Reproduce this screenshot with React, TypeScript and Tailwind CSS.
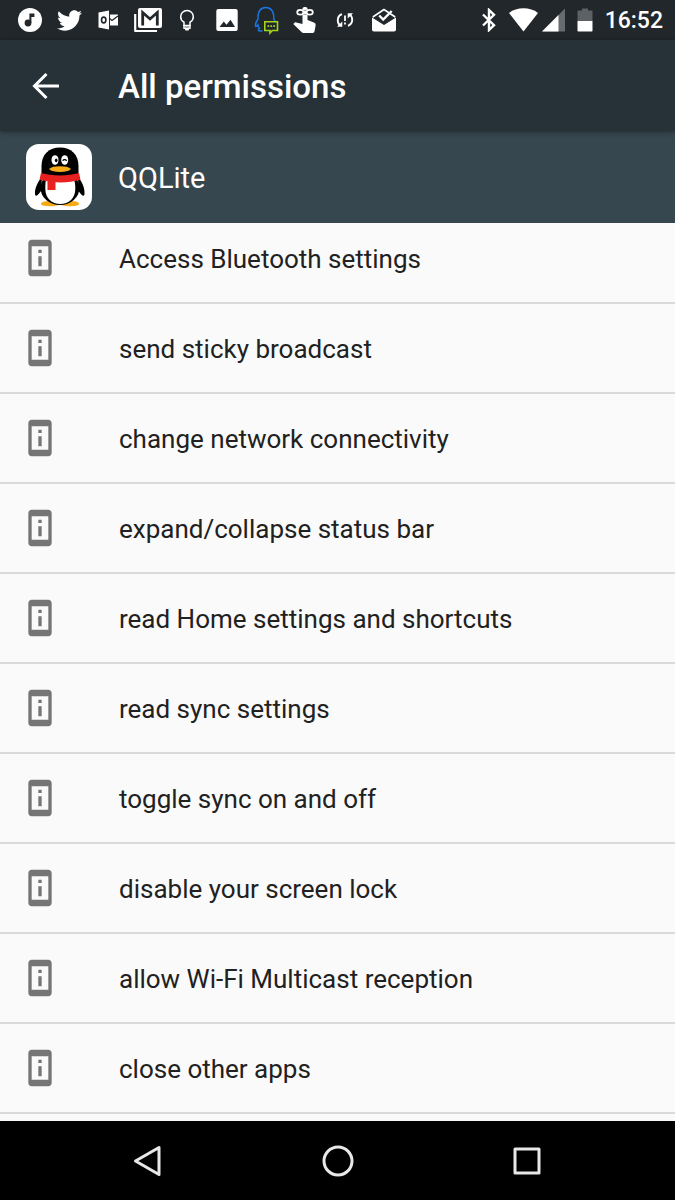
import { MdPermDeviceInformation } from 'react-icons/md';
import { FaTwitter } from 'react-icons/fa';

interface IconProps {
  children: React.ReactNode;
}

const permissions: string[] = [
  'Access Bluetooth settings',
  'send sticky broadcast',
  'change network connectivity',
  'expand/collapse status bar',
  'read Home settings and shortcuts',
  'read sync settings',
  'toggle sync on and off',
  'disable your screen lock',
  'allow Wi-Fi Multicast reception',
  'close other apps'
];

const StatusIcon = ({ children }: IconProps) => (
  <svg viewBox="0 0 30 30" className="w-[30px] h-[30px] shrink-0" fill="none" aria-hidden="true">
    {children}
  </svg>
);

const NotificationIcons = () => (
  <div className="grid w-[394px] shrink-0 grid-cols-10 items-center justify-items-center">
    {/* music */}
    <StatusIcon>
      <circle cx="15" cy="15" r="12" fill="#fff" />
      <circle cx="13" cy="18" r="3.4" fill="#21272b" />
      <path d="M14.4 18V8.5h5v3.400h-3V18z" fill="#21272b" />
    </StatusIcon>
    <FaTwitter className="w-[25px] h-[25px]" aria-hidden="true" />
    {/* outlook */}
    <StatusIcon>
      <path d="M5.5 7.5 16 5.5v19l-10.500-2z" fill="#fff" />
      <ellipse cx="10.700" cy="15" rx="2.200" ry="2.900" stroke="#21272b" strokeWidth="1.600" />
      <path d="M17 9.500h8v11h-8z" fill="#fff" />
      <path d="m16.500 13.500 2.500 2 6-4.500" stroke="#21272b" strokeWidth="1.300" />
    </StatusIcon>
    {/* gmail */}
    <StatusIcon>
      <path d="M2.200 9v17H24" stroke="#fff" strokeWidth="2.200" strokeLinejoin="round" />
      <rect x="5" y="3" width="24" height="20" rx="2" fill="#fff" />
      <path d="M9.700 20.500V7.500L17 14l7.300-6.500v13" stroke="#21272b" strokeWidth="2.800" />
    </StatusIcon>
    {/* bulb */}
    <StatusIcon>
      <path
        d="M12 20.500v-3.300C9.800 16 8.700 14 8.700 11.700a6.300 6.300 0 0 1 12.600 0c0 2.300-1.100 4.300-3.300 5.500v3.300z"
        stroke="#fff"
        strokeWidth="1.500"
      />
      <path d="M11.300 20h7.400v4h-1.500l-.7 1.500h-3l-.7-1.500h-1.500z" fill="#fff" />
      <path d="M12.500 22h5" stroke="#21272b" strokeWidth=".7" />
    </StatusIcon>
    {/* picture */}
    <StatusIcon>
      <rect x="4.300" y="4" width="21.400" height="22" rx="2" fill="#fff" />
      <path d="m7.500 22 4.300-5.500 2.700 3.200 4-5 4.500 7.300z" fill="#21272b" />
    </StatusIcon>
    {/* qq message */}
    <StatusIcon>
      <path
        d="M11.500 25.500c-2 1-4.500.8-4-1l1-1.200c-1-1-1.500-2.300-1.600-3.300-1 1.300-2.200 2.200-2.400.8-.3-2 .8-4.300 2.500-6.500C6.500 6.500 9.500 2.500 14.800 2.500s8.400 4 8 11.800c.5.600 1 1.200 1.300 2"
        stroke="#1878e0"
        strokeWidth="1.500"
      />
      <path d="M13.800 16.800h12.700v8.700h-5.200L19 28v-2.500h-5.200z" fill="#21272b" stroke="#a4d51c" strokeWidth="1.600" />
      <path d="M16.500 21.200h1.700M19.400 21.200h1.700M22.300 21.200H24" stroke="#a4d51c" strokeWidth="1.800" />
    </StatusIcon>
    {/* reminder finger */}
    <StatusIcon>
      <path
        d="M12.500 3.500c0-2 5-2 5 0V15l6.300 2.500c1.500.6 2 1.400 1.800 3l-1 5.500c-.2 1.200-.9 2-2 2H13.500c-.8 0-1.400-.3-2-.9L3.300 19l1.300-1.300c.4-.4 1-.5 1.600-.3l6.300 1.500z"
        fill="#fff"
      />
      <path d="M12 7.200h6" stroke="#21272b" strokeWidth="4.500" />
      <ellipse cx="10.300" cy="7.200" rx="3.100" ry="2.400" stroke="#fff" strokeWidth="1.700" />
      <ellipse cx="19.700" cy="7.200" rx="3.100" ry="2.400" stroke="#fff" strokeWidth="1.700" />
      <circle cx="15" cy="7.200" r="2" fill="#fff" />
    </StatusIcon>
    {/* sync problem */}
    <StatusIcon>
      <path d="M12 9.200c-5 1.500-5.300 7.700-2.300 11M18 20.800c5-1.500 5.300-7.700 2.300-11" stroke="#fff" strokeWidth="1.800" />
      <path d="M7 21.800h5.300v-5.300zM23 8.200h-5.300v5.300z" fill="#fff" />
      <path d="M15 10.500v5.500M15 17.500v2" stroke="#fff" strokeWidth="1.800" />
    </StatusIcon>
    {/* inbox */}
    <StatusIcon>
      <path d="M3.800 12 15 4.500 26.200 12" stroke="#fff" strokeWidth="1.600" strokeLinejoin="round" />
      <path d="M3 12.500 15 20l12-7.500v12c0 1.200-.8 2-2 2H5c-1.200 0-2-.8-2-2z" fill="#fff" />
      <path d="m10.200 10.500 4 4 8.500-8.500" stroke="#fff" strokeWidth="2.400" />
    </StatusIcon>
  </div>
);

const SystemIcons = () => (
  <div className="flex items-center">
    {/* bluetooth */}
    <svg viewBox="0 0 16 24" className="mr-3 w-4 h-6" fill="none" stroke="#fff" strokeWidth="2.400" aria-hidden="true">
      <path d="m2 6.500 11 10.700-5 4.800V2l5 4.800L2 17.500" />
    </svg>
    <svg viewBox="0 0 29 24" className="mr-1 w-[29px] h-6" fill="#fff" aria-hidden="true">
      <path d="M14.500 23.500 0 5C4 1.800 9 .3 14.500.3S25 1.800 29 5z" />
    </svg>
    <svg viewBox="0 0 23 24" className="mr-3 w-[23px] h-6" aria-hidden="true">
      <path d="M23 .5v23H0z" fill="#666b6e" />
      <path d="M16.500 7v16.500H0z" fill="#fff" />
    </svg>
    <svg viewBox="0 0 16 24" className="mr-3 w-4 h-6" aria-hidden="true">
      <path d="M1.500 2.500H5V.5h6v2h3.500c.6 0 1 .4 1 1V13H.5V3.500c0-.6.4-1 1-1z" fill="#5c6164" />
      <path d="M.5 13h15v9.500c0 .6-.4 1-1 1h-13c-.6 0-1-.4-1-1z" fill="#fff" />
    </svg>
    <span className="pt-0.5 text-[23px] font-medium leading-6">16:52</span>
  </div>
);

const PenguinLogo = () => (
  <svg viewBox="0 0 66 66" className="w-[66px] h-[66px]" role="img" aria-label="QQLite logo">
    <rect width="66" height="66" rx="13" fill="#fff" />
    <path d="M15 60c0-1.800 3-3 9-3h20c6 0 9 1.200 9 3 0 1.500-4 2.200-9.500 2.200S36 61 34 61s-4 1.200-9.500 1.200S15 61.500 15 60z" fill="#f6ab16" />
    <path d="M16 33c-4.500 5-7.500 12-7 17 .3 3 2.500 2 6-3zM52 33c4.500 5 7 12 6.500 17-.3 3-2.500 2-6-3z" />
    <ellipse cx="34" cy="44" rx="19.500" ry="17" />
    <path d="M15.500 34V22C15.500 10.500 23 3.500 34 3.500S52.500 10.500 52.500 22v12z" />
    <path d="M20.500 34h27c1.500 3 1.800 7 1.800 11 0 9-6.500 15-15 15s-15-6-15-15c0-4 0-8 1.200-11z" fill="#fff" />
    <ellipse cx="29" cy="16" rx="3.500" ry="4.800" fill="#fff" />
    <ellipse cx="38.700" cy="16" rx="3.500" ry="4.800" fill="#fff" />
    <ellipse cx="30.200" cy="16.300" rx="1.300" ry="1.900" />
    <path d="M36.700 16.800c.8-1.500 3-1.500 4 0" fill="none" stroke="#000" strokeWidth="1.200" />
    <path d="M23 25c2-2 6-2.700 11-2.700S43 23 45 25c-2 2.200-6 3-11 3S25 27.200 23 25z" fill="#f6ab16" />
    <path d="M15 29c11 3.200 27 3.200 38 0l1.500 6.500c-7 2.500-16 3.200-25 2.800V46h-8v-8.700c-3-.4-6-1-8-1.800z" fill="#e6211f" />
  </svg>
);

const App = () => {
  return (
    <div className="flex min-h-screen flex-col bg-[#fafafa] font-[Roboto,sans-serif] text-white">
      <div className="flex h-10 items-center justify-between bg-[#21272b] pl-[10px] pr-3">
        <NotificationIcons />
        <SystemIcons />
      </div>

      <header className="relative z-10 flex h-[91px] items-center bg-[#263238] pl-[26px] shadow-[0_1px_5px_rgba(0,0,0,0.4)]">
        <button type="button" aria-label="Back" className="mr-[52px] w-10">
          <svg viewBox="0 0 40 40" className="w-10 h-10" fill="none" stroke="#fff" strokeWidth="3">
            <path d="M33 20H9M20.500 8 8.500 20l12 12" />
          </svg>
        </button>
        <h1 className="pt-0.5 text-[33px] font-medium leading-10">All permissions</h1>
      </header>

      <section className="flex h-[92px] items-center gap-[26px] bg-[#37474f] pl-[26px]">
        <PenguinLogo />
        <h2 className="pt-0.5 text-[29px] leading-9">QQLite</h2>
      </section>

      <main className="flex-1 overflow-hidden">
        {/* list is scrolled slightly under the app header */}
        <ul className="-mt-[9px]">
          {permissions.map((name) => (
            <li key={name} className="flex h-[90px] items-center gap-[59px] border-b-2 border-[#dadada] pl-5 text-[#212121]">
              <MdPermDeviceInformation className="w-10 h-10 text-[#757575]" aria-hidden="true" />
              <span className="pt-0.5 text-[26px] leading-8">{name}</span>
            </li>
          ))}
        </ul>
      </main>

      <nav className="grid h-[79px] grid-cols-3 items-center justify-items-center bg-black px-[8%]">
        <button type="button" aria-label="Back">
          <svg viewBox="0 0 32 32" className="w-8 h-8" fill="none" stroke="#e8e8e8" strokeWidth="3" strokeLinejoin="round">
            <path d="M26 2.500v27L2.500 16z" />
          </svg>
        </button>
        <button type="button" aria-label="Home">
          <svg viewBox="0 0 32 32" className="w-8 h-8" fill="none" stroke="#e8e8e8" strokeWidth="3">
            <circle cx="16" cy="16" r="14" />
          </svg>
        </button>
        <button type="button" aria-label="Recent apps">
          <svg viewBox="0 0 32 32" className="w-8 h-8" fill="none" stroke="#e8e8e8" strokeWidth="3" strokeLinejoin="round">
            <rect x="4" y="4" width="24" height="24" />
          </svg>
        </button>
      </nav>
    </div>
  );
};

export default App;
